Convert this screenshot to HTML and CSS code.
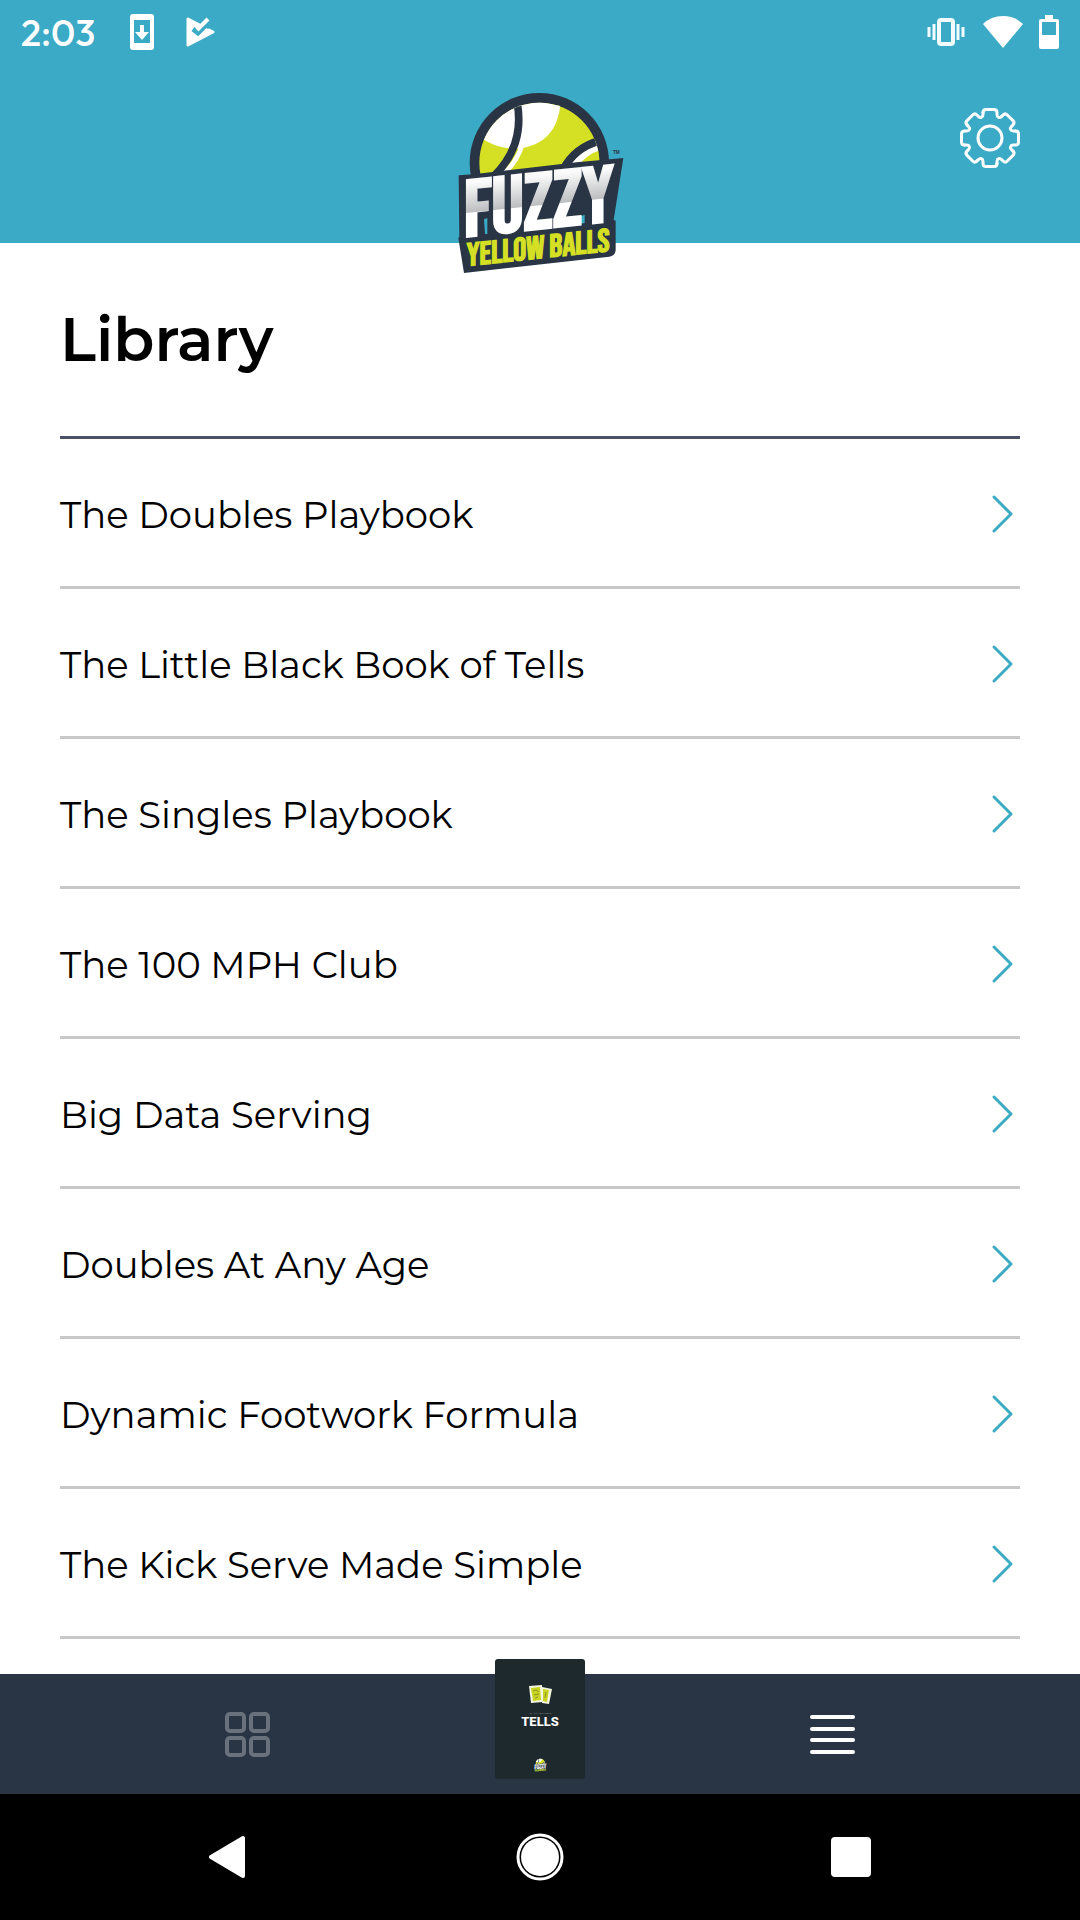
FILE: index.html
```html
<!DOCTYPE html>
<html lang="en">
<head>
    <meta charset="UTF-8">
    <meta name="viewport" content="width=device-width, initial-scale=1.0">
    <title>Library</title>
    <link rel="stylesheet" href="styles.css">
</head>
<body>
    <!-- Shared shapes -->
    <svg class="defs" width="0" height="0" aria-hidden="true">
        <defs>
            <linearGradient id="steel" x1="0" y1="0" x2="0" y2="1">
                <stop offset="0" stop-color="#fff"/>
                <stop offset="0.2" stop-color="#fafafa"/>
                <stop offset="0.5" stop-color="#bcbec0"/>
                <stop offset="0.51" stop-color="#fff"/>
                <stop offset="1" stop-color="#fff"/>
            </linearGradient>
            <clipPath id="ballClip"><circle cx="298" cy="248" r="180"/></clipPath>
            <path id="tooth" d="M-7-25.5Q-7-28.5-4-28.5L4-28.5Q7-28.5 7-25.5L7-23.5Q7-21.2 8.5-20.6Q10.04-19.94 11.67-21.57L13.08-22.98"/>
        </defs>
        <symbol id="chevron" viewBox="0 0 24 40">
            <path d="M4 3L21 20L4 37" fill="none" stroke="#3baac3" stroke-width="3" stroke-linecap="round" stroke-linejoin="round"/>
        </symbol>
    </svg>

    <div class="app">
        <header class="header">
            <div class="status-bar">
                <div class="status-group">
                    <span class="time">2:03</span>
                    <svg class="icon-update" width="24" height="36" viewBox="0 0 24 36">
                        <path fill="#fff" fill-rule="evenodd" d="M3 0H21Q24 0 24 3V33Q24 36 21 36H3Q0 36 0 33V3Q0 0 3 0ZM4 6V29H20V6ZM10 11H14V18H19L12 26L5 18H10Z"/>
                    </svg>
                    <svg class="icon-play" width="30" height="32" viewBox="0 0 30 32">
                        <path d="M2 3L27 16L2 29Z" fill="#fff" stroke="#fff" stroke-width="3" stroke-linejoin="round"/>
                        <path d="M14 8L21 0L28 4V9L22 13Z" fill="#3baac6"/>
                        <path d="M7 13L12 17L23 6" fill="none" stroke="#3baac6" stroke-width="5"/>
                        <path d="M11 14L22 3" fill="none" stroke="#fff" stroke-width="4"/>
                    </svg>
                </div>
                <div class="status-group">
                    <svg class="icon-vibrate" width="38" height="28" viewBox="0 0 38 28" fill="none" stroke="#f2fbfd" stroke-width="3">
                        <rect x="12" y="2" width="14" height="24" rx="2" stroke-width="4"/>
                        <path d="M7 6V22M2 9V19M31 6V22M36 9V19"/>
                    </svg>
                    <svg class="icon-wifi" width="40" height="34" viewBox="0 0 40 34">
                        <path d="M0 9Q8 1 20 1T40 9L20 33Z" fill="#fff"/>
                    </svg>
                    <svg class="icon-battery" width="20" height="34" viewBox="0 0 20 34">
                        <path fill="#fff" fill-rule="evenodd" d="M6 0H14V4H18Q20 4 20 6V32Q20 34 18 34H2Q0 34 0 32V6Q0 4 2 4H6ZM3 7V20H17V7Z"/>
                    </svg>
                </div>
            </div>
            <div class="toolbar">
                <svg class="logo" viewBox="54 39 495 540" role="img" aria-label="Fuzzy Yellow Balls">
                    <g id="logo">
                        <circle cx="298" cy="248" r="209" fill="#293544"/>
                        <g clip-path="url(#ballClip)">
                            <rect x="100" y="50" width="400" height="260" fill="#d5e025"/>
                            <path d="M118 170Q170 208 235 206Q350 194 362 70L300 40L140 60Z" fill="#fff"/>
                            <path d="M248 190Q232 245 190 282" fill="none" stroke="#fff" stroke-width="14"/>
                            <path d="M230 60Q258 195 160 290" fill="none" stroke="#293544" stroke-width="23"/>
                            <path d="M482 190Q425 215 385 280" fill="none" stroke="#fff" stroke-width="34"/>
                            <path d="M482 210Q440 222 415 258L490 260Z" fill="#d5e025"/>
                            <path d="M486 180Q405 200 370 268" fill="none" stroke="#293544" stroke-width="24"/>
                        </g>
                        <path d="M56 286L100 283L410 247L550 234L521 420L527 422V510Q526 527 508 530L72 579L55 474L58 470Z" fill="#293544"/>
                        <path d="M132 418L142 414V462H135ZM420 410L434 404V430H422Z" fill="#3baac6"/>
                        <text class="logo-fuzzy" transform="translate(72 470) skewY(-6)">FUZZY</text>
                        <text class="logo-yellow" transform="translate(80 558) skewY(-6)">YELLOW BALLS</text>
                        <text class="logo-tm" x="519" y="221">TM</text>
                    </g>
                </svg>
                <button class="settings" aria-label="Settings">
                    <svg width="60" height="60" viewBox="-30 -30 60 60" fill="none" stroke="#fff" stroke-width="3" stroke-linecap="round">
                        <use href="#tooth"/>
                        <use href="#tooth" transform="rotate(45)"/>
                        <use href="#tooth" transform="rotate(90)"/>
                        <use href="#tooth" transform="rotate(135)"/>
                        <use href="#tooth" transform="rotate(180)"/>
                        <use href="#tooth" transform="rotate(225)"/>
                        <use href="#tooth" transform="rotate(270)"/>
                        <use href="#tooth" transform="rotate(315)"/>
                        <circle r="12"/>
                    </svg>
                </button>
            </div>
        </header>

        <main class="content">
            <h1>Library</h1>
            <ul class="library">
                <li><a href="#">The Doubles Playbook <svg class="chevron"><use href="#chevron"/></svg></a></li>
                <li><a href="#">The Little Black Book of Tells <svg class="chevron"><use href="#chevron"/></svg></a></li>
                <li><a href="#">The Singles Playbook <svg class="chevron"><use href="#chevron"/></svg></a></li>
                <li><a href="#">The 100 MPH Club <svg class="chevron"><use href="#chevron"/></svg></a></li>
                <li><a href="#">Big Data Serving <svg class="chevron"><use href="#chevron"/></svg></a></li>
                <li><a href="#">Doubles At Any Age <svg class="chevron"><use href="#chevron"/></svg></a></li>
                <li><a href="#">Dynamic Footwork Formula <svg class="chevron"><use href="#chevron"/></svg></a></li>
                <li><a href="#">The Kick Serve Made Simple <svg class="chevron"><use href="#chevron"/></svg></a></li>
            </ul>
        </main>

        <nav class="tab-bar">
            <button class="tab" aria-label="Grid">
                <svg width="46" height="46" viewBox="0 0 46 46" fill="none" stroke="#69727c" stroke-width="4">
                    <rect x="2" y="3" width="17" height="17" rx="3"/>
                    <rect x="26" y="3" width="17" height="17" rx="3"/>
                    <rect x="2" y="27" width="17" height="17" rx="3"/>
                    <rect x="26" y="27" width="17" height="17" rx="3"/>
                </svg>
            </button>
            <a class="cover" href="#">
                <svg width="24" height="20" viewBox="0 0 24 20">
                    <path d="M14 2L24 4L21 19L14 18Z" fill="#f5f6df"/>
                    <path d="M15 4L21 5L19 17L15 16Z" fill="#c9d322"/>
                    <path d="M1 1L14 0L15 17L3 18Z" fill="#f5f6df"/>
                    <path d="M3 3L12 2L13 15L5 16Z" fill="#c9d322"/>
                    <path d="M5 6L8 5L11 7M6 10L11 9M7 13L10 12M18 7L17 13" stroke="#8c9425" fill="none"/>
                </svg>
                <span class="cover-sub">The Little Black Book of</span>
                <span class="cover-title">TELLS</span>
                <svg class="cover-logo" viewBox="54 39 495 540" aria-hidden="true"><use href="#logo"/></svg>
            </a>
            <button class="tab" aria-label="List">
                <svg width="46" height="42" viewBox="0 0 46 42" stroke="#fff" stroke-width="4" stroke-linecap="round">
                    <path d="M2 4H43M2 16H43M2 27H43M2 39H43"/>
                </svg>
            </button>
        </nav>

        <nav class="system-bar">
            <button aria-label="Back">
                <svg width="40" height="44" viewBox="0 0 40 44">
                    <path d="M2 22L34 3V41Z" fill="#fff" stroke="#fff" stroke-width="4" stroke-linejoin="round"/>
                </svg>
            </button>
            <button aria-label="Home">
                <svg width="48" height="48" viewBox="0 0 48 48">
                    <circle cx="24" cy="24" r="22" fill="none" stroke="#fff" stroke-width="3"/>
                    <circle cx="24" cy="24" r="19" fill="#fff"/>
                </svg>
            </button>
            <button aria-label="Recents">
                <svg width="40" height="40" viewBox="0 0 40 40"><rect width="40" height="40" rx="4" fill="#fff"/></svg>
            </button>
        </nav>
    </div>
</body>
</html>
```
FILE: styles.css
```css
* {
    box-sizing: border-box;
}

body {
    margin: 0;
    background: #fff;
    color: #000;
    font-family: Montserrat, Inter, sans-serif;
}

button {
    padding: 0;
    border: none;
    background: none;
    cursor: pointer;
}

svg {
    display: block;
    flex-shrink: 0;
}

.defs {
    position: absolute;
}

.app {
    display: flex;
    flex-direction: column;
    height: 100vh;
}

/* Header */
.header {
    background: #3baac6;
    height: 243px;
    flex-shrink: 0;
}

.status-bar {
    display: flex;
    justify-content: space-between;
    align-items: center;
    height: 64px;
    padding: 0 21px;
}

.status-group {
    display: flex;
    align-items: center;
}

.time {
    color: #fff;
    font: 500 37px Outfit, Lato, sans-serif;
}

.icon-update {
    margin-left: 35px;
}

.icon-play {
    margin-left: 32px;
}

.icon-wifi {
    margin-left: 18px;
}

.icon-battery {
    margin-left: 16px;
}

.toolbar {
    display: grid;
    grid-template-columns: 1fr 165px 1fr;
    align-items: start;
    padding: 29px 60px 0;
}

.logo {
    grid-column: 2;
    width: 165px;
    height: 180px;
    overflow: visible;
}

.settings {
    justify-self: end;
    margin-top: 15px;
}

.logo-fuzzy {
    font: 240px "Bebas Neue", "Roboto Condensed", "Liberation Sans", sans-serif;
    fill: url(#steel);
    stroke: url(#steel);
    stroke-width: 8px;
}

.logo-yellow {
    font: 97px "Bebas Neue", "Roboto Condensed", "Liberation Sans", sans-serif;
    fill: #d5e025;
    stroke: #d5e025;
    stroke-width: 4px;
}

.logo-tm {
    font: bold 14px "Liberation Sans", sans-serif;
    fill: #293544;
}

/* Library list */
.content {
    flex: 1;
    min-height: 0;
    overflow: hidden;
    padding: 0 60px;
}

h1 {
    margin: 0;
    padding: 61px 0 60px;
    font-size: 60px;
    font-weight: 600;
    line-height: 72px;
    border-bottom: 3px solid #4c5264;
}

.library {
    margin: 0;
    padding: 0;
    list-style: none;
}

.library a {
    display: flex;
    justify-content: space-between;
    align-items: center;
    height: 150px;
    padding: 3px 6px 0 0;
    border-bottom: 3px solid #c8c8c8;
    color: #000;
    font-size: 37px;
    font-weight: 400;
    text-decoration: none;
}

.chevron {
    width: 24px;
    height: 40px;
}

/* Bottom navigation */
.tab-bar {
    display: flex;
    flex-shrink: 0;
    height: 120px;
    background: #293544;
}

.tab {
    display: flex;
    flex: 1;
    justify-content: center;
    align-items: center;
}

.cover {
    display: flex;
    flex-direction: column;
    align-items: center;
    width: 90px;
    height: 120px;
    margin-top: -15px;
    padding-top: 26px;
    border-radius: 3px;
    background: #1e292e;
    color: #fff;
    text-decoration: none;
}

.cover-sub {
    margin-top: 7px;
    color: #9aa1a4;
    font-size: 2px;
    line-height: 4px;
}

.cover-title {
    font-family: Roboto, sans-serif;
    font-size: 13px;
    font-weight: 800;
    line-height: 12px;
}

.cover-logo {
    width: 15px;
    height: 14px;
    margin-top: 30px;
    overflow: visible;
}

.system-bar {
    display: grid;
    grid-template-columns: repeat(3, 1fr);
    place-items: center;
    flex-shrink: 0;
    height: 126px;
    padding: 0 73px;
    background: #000;
}
```
